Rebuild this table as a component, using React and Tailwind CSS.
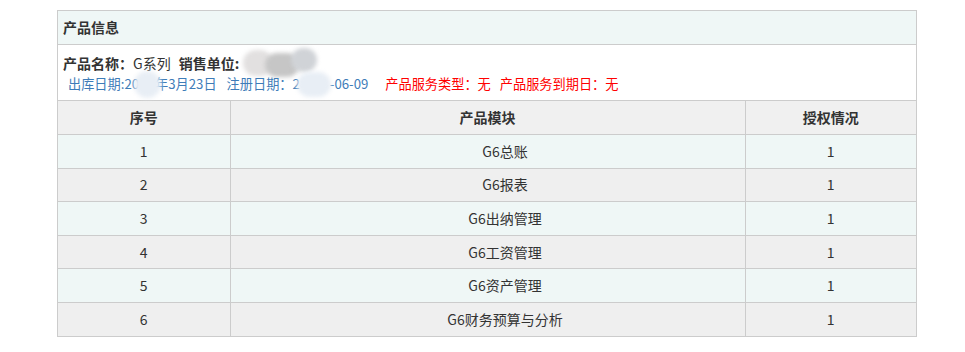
import React from 'react';

const rows = [
  { no: 1, name: 'G6总账', auth: 1 },
  { no: 2, name: 'G6报表', auth: 1 },
  { no: 3, name: 'G6出纳管理', auth: 1 },
  { no: 4, name: 'G6工资管理', auth: 1 },
  { no: 5, name: 'G6资产管理', auth: 1 },
  { no: 6, name: 'G6财务预算与分析', auth: 1 },
];

function Blur({ className }) {
  // masked (blurred) text in the original screenshot
  return <span className={`absolute rounded-full blur-[2px] ${className}`} />;
}

export default function App() {
  return (
    <div className="w-[965px] h-[352px] bg-white pt-[10px] pl-[57px] font-['Microsoft_YaHei','Noto_Sans_CJK_SC',sans-serif] text-[#333]">
      <div className="w-[860px] border border-[#ccc]">
        {/* Section title */}
        <div className="h-[34px] bg-[#eff7f6] border-b border-[#ccc] px-[5px] flex items-center text-[14px] font-bold">
          产品信息
        </div>

        {/* Product info */}
        <div className="h-[55px] px-[5px] pt-[8px] relative">
          <div className="text-[14px] leading-[20px] flex items-center">
            <span className="font-bold">产品名称：</span>
            <span>G系列</span>
            <span className="font-bold ml-[8px]">销售单位:</span>
            <span className="relative inline-block w-[78px] h-[20px] ml-[2px]">
              <Blur className="left-[2px] top-[-3px] w-[30px] h-[26px] bg-[#e2e0e0]" />
              <Blur className="left-[24px] top-[0px] w-[34px] h-[24px] bg-[#c6c6c6]" />
              <Blur className="left-[50px] top-[-5px] w-[26px] h-[24px] bg-[#d0d3d7]" />
            </span>
          </div>
          <div className="text-[13.2px] leading-[20px] flex items-center mt-[1px] ml-[5px]">
            <span className="text-[#3e7cb8] relative">
              出库日期:20<span className="inline-block w-[16px]" />年3月23日
              <Blur className="left-[66px] top-[-3px] w-[27px] h-[27px] bg-[#e8eef5]" />
            </span>
            <span className="text-[#3e7cb8] relative ml-[10px]">
              注册日期：2<span className="inline-block w-[30px]" />-06-09
              <Blur className="left-[70px] top-[-2px] w-[34px] h-[25px] bg-[#e8eef5]" />
            </span>
            <span className="text-[#ff0000] ml-[17px]">产品服务类型：无</span>
            <span className="text-[#ff0000] ml-[9px]">产品服务到期日：无</span>
          </div>
        </div>

        {/* Module table */}
        <table className="w-full border-collapse text-[14px] text-center">
          <thead>
            <tr className="bg-[#f0f0f0] h-[34px]">
              <th className="w-[172px] border-y border-r border-[#ccc] font-bold">序号</th>
              <th className="border border-[#ccc] font-bold">产品模块</th>
              <th className="w-[171px] border-y border-[#ccc] font-bold">授权情况</th>
            </tr>
          </thead>
          <tbody>
            {rows.map((r, i) => (
              <tr key={r.no} className={`h-[33.6px] ${i % 2 === 0 ? 'bg-[#eff7f6]' : 'bg-[#efefef]'}`}>
                <td className={`border-r border-[#ccc] ${i < rows.length - 1 ? 'border-b' : ''}`}>{r.no}</td>
                <td className={`pl-[35px] border-r border-[#ccc] ${i < rows.length - 1 ? 'border-b' : ''}`}>{r.name}</td>
                <td className={`border-[#ccc] ${i < rows.length - 1 ? 'border-b' : ''}`}>{r.auth}</td>
              </tr>
            ))}
          </tbody>
        </table>
      </div>
    </div>
  );
}
